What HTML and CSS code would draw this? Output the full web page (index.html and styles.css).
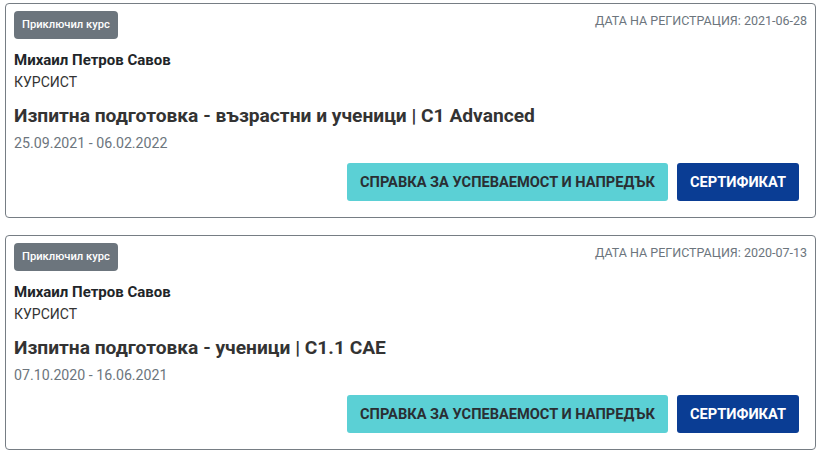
FILE: index.html
```html
<!DOCTYPE html>
<html lang="bg">
<head>
<meta charset="utf-8">
<title>Курсове</title>
<link rel="stylesheet" href="styles.css">
</head>
<body>
<div class="list">
  <div class="card">
    <div class="card-top">
      <span class="badge">Приключил курс</span>
      <span class="reg">ДАТА НА РЕГИСТРАЦИЯ: 2021-06-28</span>
    </div>
    <div class="name">Михаил Петров Савов</div>
    <div class="role">КУРСИСТ</div>
    <div class="title">Изпитна подготовка - възрастни и ученици | C1 Advanced</div>
    <div class="dates">25.09.2021 - 06.02.2022</div>
    <div class="actions">
      <a class="btn btn-info" href="#">Справка за успеваемост и напредък</a>
      <a class="btn btn-primary" href="#">Сертификат</a>
    </div>
  </div>
  <div class="card">
    <div class="card-top">
      <span class="badge">Приключил курс</span>
      <span class="reg">ДАТА НА РЕГИСТРАЦИЯ: 2020-07-13</span>
    </div>
    <div class="name">Михаил Петров Савов</div>
    <div class="role">КУРСИСТ</div>
    <div class="title">Изпитна подготовка - ученици | C1.1 CAE</div>
    <div class="dates">07.10.2020 - 16.06.2021</div>
    <div class="actions">
      <a class="btn btn-info" href="#">Справка за успеваемост и напредък</a>
      <a class="btn btn-primary" href="#">Сертификат</a>
    </div>
  </div>
</div>
</body>
</html>
```
FILE: styles.css
```css
* { box-sizing: border-box; }
html, body { margin: 0; padding: 0; background: #fff; }
body {
  font-family: "Roboto", "Noto Sans", sans-serif;
  color: #212529;
}
.list {
  padding: 3px 4px 0 5px;
  display: flex;
  flex-direction: column;
  gap: 17px;
}
.card {
  border: 1px solid #767d84;
  border-radius: 4px;
  padding: 7px 8px 16px 8px;
  display: flex;
  flex-direction: column;
}
.card-top {
  display: flex;
  justify-content: space-between;
  align-items: flex-start;
}
.badge {
  display: inline-block;
  background: #6c757d;
  color: #fff;
  font-size: 11.2px;
  font-weight: 500;
  height: 28px;
  line-height: 28px;
  padding: 0 8px;
  border-radius: 4px;
}
.reg {
  font-size: 12.5px;
  line-height: 20px;
  color: #6c757d;
}
.name {
  margin-top: 10px;
  font-size: 15px;
  line-height: 22px;
  font-weight: 700;
}
.role {
  font-size: 14px;
  line-height: 22px;
  color: #333;
}
.title {
  margin-top: 9px;
  font-size: 19.2px;
  line-height: 28px;
  font-weight: 700;
  color: #333;
}
.dates {
  margin-top: 2px;
  font-size: 14.2px;
  line-height: 22px;
  color: #6c757d;
}
.actions {
  margin-top: 9px;
  padding-right: 8px;
  display: flex;
  justify-content: flex-end;
  gap: 9px;
}
.btn {
  display: inline-block;
  height: 38px;
  line-height: 38px;
  padding: 0 13px;
  border-radius: 3px;
  font-size: 14.6px;
  font-weight: 700;
  text-transform: uppercase;
  text-decoration: none;
}
.btn-info {
  background: #5bd0d5;
  color: #2a2e33;
}
.btn-primary {
  background: #0a3d94;
  color: #fff;
}
```
